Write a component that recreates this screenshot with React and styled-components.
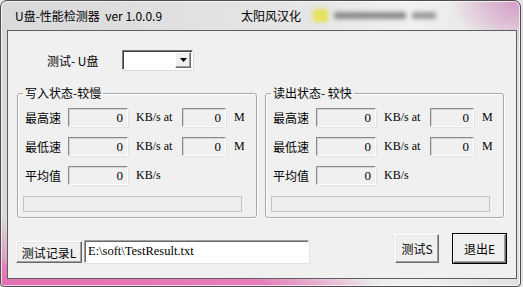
import styled, { createGlobalStyle } from 'styled-components';

const GlobalStyle = createGlobalStyle`
  html, body {
    margin: 0;
    padding: 0;
    background: #e6e6e6;
  }
  body {
    width: 523px;
    height: 287px;
    overflow: hidden;
    font-family: "Noto Sans CJK SC", "Liberation Sans", sans-serif;
    font-size: 12px;
    color: #000;
  }
`;

const cjk = `"Noto Sans CJK SC", "Liberation Sans", sans-serif`;
const serif = `"Liberation Serif", "Noto Sans CJK SC", serif`;

const Window = styled.div`
  box-sizing: border-box;
  width: 521px;
  height: 287px;
  display: flex;
  flex-direction: column;
  border: 1px solid #4d4d4d;
  border-radius: 7px 7px 4px 4px;
  box-shadow: inset 0 0 0 1px rgba(255, 255, 255, 0.7);
  background:
    radial-gradient(ellipse 70px 45px at 100% 0, rgba(214, 150, 196, 0.95), rgba(214, 150, 196, 0) 100%),
    radial-gradient(ellipse 380px 26px at 0 100%, #e46db1 0, #e77dba 70%, rgba(231, 125, 186, 0) 100%),
    radial-gradient(ellipse 14px 70px at 0 100%, #e46db1 0, rgba(228, 109, 177, 0) 100%),
    linear-gradient(to right, #d9d9d9 0, #e6e6e6 60%, #f1f1f1 80%, #e0e0e0 100%);
`;

const TitleBar = styled.div`
  height: 29px;
  display: flex;
  align-items: center;
  padding-left: 14px;
  font-family: ${cjk};
  font-size: 12px;
  white-space: pre;
`;

const TitleText = styled.span`
  width: ${(p) => p.$w}px;
  flex: none;
`;

const Blurred = styled.div`
  display: flex;
  align-items: center;
  gap: 6px;
  filter: blur(2px);
`;

const BlurBlob = styled.div`
  width: ${(p) => p.$w}px;
  height: ${(p) => p.$h}px;
  background: ${(p) => p.$c};
  border-radius: 2px;
`;

const Client = styled.div`
  flex: 1;
  margin: 0 3px 7px 6px;
  border: 1px solid #5e5e5e;
  background: #f0f0f0;
  display: flex;
  flex-direction: column;
`;

const ComboRow = styled.div`
  display: flex;
  align-items: center;
  padding: 19px 0 0 39px;
`;

const ComboLabel = styled.span`
  width: 75px;
  font-family: ${cjk};
`;

const Combo = styled.div`
  box-sizing: border-box;
  width: 71px;
  height: 20px;
  display: flex;
  justify-content: flex-end;
  align-items: stretch;
  background: #fff;
  border: 1px solid;
  border-color: #7a7a7a #ffffff #ffffff #7a7a7a;
  box-shadow: inset 1px 1px 0 #404040, 1px 1px 0 #dcdcdc;
  padding: 1px 1px 1px 0;
`;

const ComboButton = styled.div`
  box-sizing: border-box;
  width: 16px;
  display: flex;
  align-items: center;
  justify-content: center;
  background: #f0f0f0;
  border: 1px solid;
  border-color: #ffffff #696969 #696969 #ffffff;
  box-shadow: inset -1px -1px 0 #a0a0a0;
`;

const Groups = styled.div`
  display: flex;
  gap: 8px;
  padding: 16px 0 0 9px;
`;

const Group = styled.fieldset`
  box-sizing: border-box;
  width: ${(p) => p.$w}px;
  min-width: 0;
  margin: 0;
  padding: 8px 0 5px 7px;
  border: 1px solid #a8a8a8;
  border-radius: 3px;
  box-shadow: inset 1px 1px 0 #ffffff, 1px 1px 0 #ffffff;
  display: flex;
  flex-direction: column;
  gap: 10px;
`;

const Legend = styled.legend`
  margin-left: -2px;
  padding: 0 2px;
  font-family: ${cjk};
  font-size: 12px;
  line-height: 14px;
`;

const Row = styled.div`
  display: flex;
  align-items: center;
  height: 19px;
`;

const Label = styled.span`
  width: 43px;
  flex: none;
  font-family: ${cjk};
  font-size: 12px;
`;

const Field = styled.div`
  box-sizing: border-box;
  width: ${(p) => p.$w}px;
  flex: none;
  height: 19px;
  padding-right: 4px;
  display: flex;
  align-items: center;
  justify-content: flex-end;
  background: #f0f0f0;
  border: 1px solid;
  border-color: #8a8a8a #ffffff #ffffff #8a8a8a;
  box-shadow: 1px 1px 0 #e3e3e3, inset 1px 1px 0 #d4d4d4;
  font-family: ${serif};
  font-size: 13px;
`;

const Unit = styled.span`
  box-sizing: border-box;
  width: ${(p) => p.$w}px;
  padding-left: 8px;
  font-family: ${serif};
  font-size: 12px;
  flex: none;
  white-space: pre;
`;

const Progress = styled.div`
  box-sizing: border-box;
  width: 219px;
  height: 16px;
  margin: 1px 0 0 -2px;
  background: #eeeeee;
  border: 1px solid;
  border-color: #b2b2b2 #ffffff #ffffff #b2b2b2;
  outline: 1px solid #c4c4c4;
  outline-offset: -1px;
`;

const BottomRow = styled.div`
  display: flex;
  align-items: flex-end;
  padding: 16px 10px 0 8px;
`;

const Button = styled.button`
  box-sizing: border-box;
  width: ${(p) => p.$w}px;
  height: ${(p) => p.$h}px;
  padding: 0;
  background: #f0f0f0;
  font-family: ${cjk};
  font-size: 12px;
  color: #000;
  border: 1px solid;
  border-color: #ffffff #696969 #696969 #ffffff;
  box-shadow: inset -1px -1px 0 #a0a0a0, inset 1px 1px 0 #e3e3e3
    ${(p) => (p.$default ? ', 0 0 0 1px #000' : '')};
  margin-left: ${(p) => p.$ml || 0}px;
`;

const PathField = styled.div`
  box-sizing: border-box;
  width: 225px;
  height: 23px;
  margin-left: 2px;
  padding-left: 3px;
  display: flex;
  align-items: center;
  background: #fff;
  border: 1px solid;
  border-color: #a0a0a0 #ffffff #ffffff #a0a0a0;
  box-shadow: inset 1px 1px 0 #696969, 1px 1px 0 #e3e3e3;
  font-family: ${serif};
  font-size: 12.5px;
`;

const Spacer = styled.div`
  flex: 1;
`;

const Arrow = () => (
  <svg width="7" height="4" viewBox="0 0 7 4">
    <path d="M0 0h7L3.5 4z" fill="#000" />
  </svg>
);

const SpeedGroup = ({ title, width }) => (
  <Group $w={width}>
    <Legend>{title}</Legend>
    <Row>
      <Label>最高速</Label>
      <Field $w={60}>0</Field>
      <Unit $w={54}>KB/s at</Unit>
      <Field $w={44}>0</Field>
      <Unit $w={20}>M</Unit>
    </Row>
    <Row>
      <Label>最低速</Label>
      <Field $w={60}>0</Field>
      <Unit $w={54}>KB/s at</Unit>
      <Field $w={44}>0</Field>
      <Unit $w={20}>M</Unit>
    </Row>
    <Row>
      <Label>平均值</Label>
      <Field $w={60}>0</Field>
      <Unit $w={54}>KB/s</Unit>
    </Row>
    <Progress />
  </Group>
);

const App = () => {
  return (
    <>
      <GlobalStyle />
      <Window>
        <TitleBar>
          <TitleText $w={226}>U盘-性能检测器  ver 1.0.0.9</TitleText>
          <TitleText $w={72}>太阳风汉化</TitleText>
          <Blurred>
            <BlurBlob $w={15} $h={13} $c="#e6e05a" />
            <BlurBlob $w={72} $h={7} $c="#8c8c8c" />
            <BlurBlob $w={24} $h={7} $c="#9a9a9a" />
          </Blurred>
        </TitleBar>
        <Client>
          <ComboRow>
            <ComboLabel>测试- U盘</ComboLabel>
            <Combo>
              <ComboButton>
                <Arrow />
              </ComboButton>
            </Combo>
          </ComboRow>
          <Groups>
            <SpeedGroup title="写入状态-较慢" width={240} />
            <SpeedGroup title="读出状态- 较快" width={239} />
          </Groups>
          <BottomRow>
            <Button $w={66} $h={22}>测试记录L</Button>
            <PathField>E:\soft\TestResult.txt</PathField>
            <Spacer />
            <Button $w={44} $h={29}>测试S</Button>
            <Button $w={53} $h={29} $ml={14} $default>
              退出E
            </Button>
          </BottomRow>
        </Client>
      </Window>
    </>
  );
};

export default App;
